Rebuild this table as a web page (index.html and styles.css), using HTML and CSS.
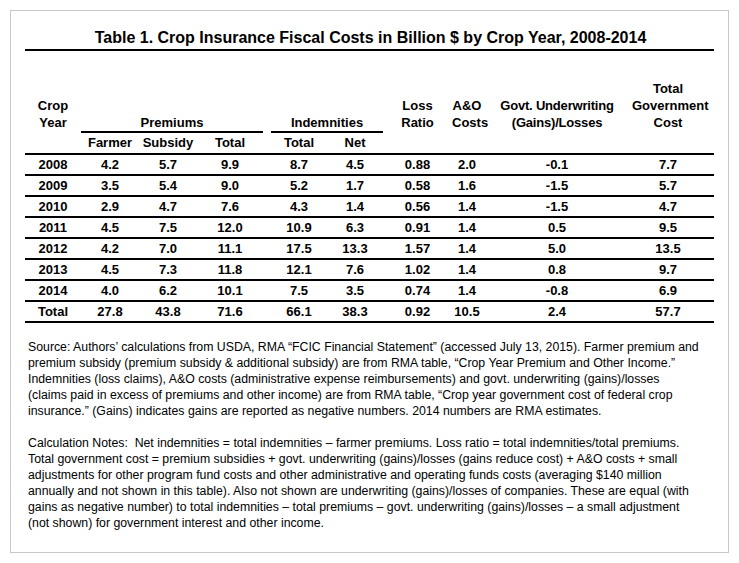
FILE: index.html
```html
<!DOCTYPE html>
<html>
<head>
<meta charset="utf-8">
<link rel="stylesheet" href="styles.css">
</head>
<body>
<div class="frame">
  <div class="title">Table 1. Crop Insurance Fiscal Costs in Billion $ by Crop Year, 2008-2014</div>
  <div class="tbl">
    <div class="head">
      <div class="h c1">Crop<br>Year</div>
      <div class="h prem">Premiums</div>
      <div class="h indem">Indemnities</div>
      <div class="h c8">Loss<br>Ratio</div>
      <div class="h c9">A&amp;O<br>Costs</div>
      <div class="h c10">Govt. Underwriting<br>(Gains)/Losses</div>
      <div class="h c11">Total<br>Government<br>Cost</div>
      <div class="s c2">Farmer</div>
      <div class="s c3">Subsidy</div>
      <div class="s c4">Total</div>
      <div class="s c6">Total</div>
      <div class="s c7">Net</div>
    </div>
    <div class="row"><span>2008</span><span>4.2</span><span>5.7</span><span>9.9</span><span></span><span>8.7</span><span>4.5</span><span>0.88</span><span>2.0</span><span>-0.1</span><span>7.7</span></div>
    <div class="row"><span>2009</span><span>3.5</span><span>5.4</span><span>9.0</span><span></span><span>5.2</span><span>1.7</span><span>0.58</span><span>1.6</span><span>-1.5</span><span>5.7</span></div>
    <div class="row"><span>2010</span><span>2.9</span><span>4.7</span><span>7.6</span><span></span><span>4.3</span><span>1.4</span><span>0.56</span><span>1.4</span><span>-1.5</span><span>4.7</span></div>
    <div class="row"><span>2011</span><span>4.5</span><span>7.5</span><span>12.0</span><span></span><span>10.9</span><span>6.3</span><span>0.91</span><span>1.4</span><span>0.5</span><span>9.5</span></div>
    <div class="row"><span>2012</span><span>4.2</span><span>7.0</span><span>11.1</span><span></span><span>17.5</span><span>13.3</span><span>1.57</span><span>1.4</span><span>5.0</span><span>13.5</span></div>
    <div class="row"><span>2013</span><span>4.5</span><span>7.3</span><span>11.8</span><span></span><span>12.1</span><span>7.6</span><span>1.02</span><span>1.4</span><span>0.8</span><span>9.7</span></div>
    <div class="row"><span>2014</span><span>4.0</span><span>6.2</span><span>10.1</span><span></span><span>7.5</span><span>3.5</span><span>0.74</span><span>1.4</span><span>-0.8</span><span>6.9</span></div>
    <div class="row last"><span>Total</span><span>27.8</span><span>43.8</span><span>71.6</span><span></span><span>66.1</span><span>38.3</span><span>0.92</span><span>10.5</span><span>2.4</span><span>57.7</span></div>
  </div>
  <div class="notes">
    <p>Source: Authors’ calculations from USDA, RMA “FCIC Financial Statement” (accessed July 13, 2015). Farmer premium and<br>premium subsidy (premium subsidy &amp; additional subsidy) are from RMA table, “Crop Year Premium and Other Income.”<br>Indemnities (loss claims), A&amp;O costs (administrative expense reimbursements) and govt. underwriting (gains)/losses<br>(claims paid in excess of premiums and other income) are from RMA table, “Crop year government cost of federal crop<br>insurance.” (Gains) indicates gains are reported as negative numbers. 2014 numbers are RMA estimates.</p>
    <p>Calculation Notes: &nbsp;Net indemnities = total indemnities – farmer premiums. Loss ratio = total indemnities/total premiums.<br>Total government cost = premium subsidies + govt. underwriting (gains)/losses (gains reduce cost) + A&amp;O costs + small<br>adjustments for other program fund costs and other administrative and operating funds costs (averaging $140 million<br>annually and not shown in this table). Also not shown are underwriting (gains)/losses of companies. These are equal (with<br>gains as negative number) to total indemnities – total premiums – govt. underwriting (gains)/losses – a small adjustment<br>(not shown) for government interest and other income.</p>
  </div>
</div>
</body>
</html>
```

FILE: styles.css
```css
* { box-sizing: border-box; }
html, body { margin: 0; padding: 0; background: #fff; }
body { font-family: "Liberation Sans", Arial, sans-serif; color: #000; }

.frame {
  margin: 10px;
  width: 719px;
  height: 543px;
  border: 1px solid #c8c8c8;
  padding: 18px 14px 0 14px;
}

.title {
  font-weight: bold;
  font-size: 16px;
  line-height: 18px;
  text-align: center;
  padding-bottom: 2px;
  border-bottom: 2px solid #000;
  padding-left: 2px;
}

.tbl { font-weight: bold; font-size: 13px; }

.head, .row {
  display: grid;
  grid-template-columns: 56px 58px 58px 66px 8px 56px 56px 69px 30px 150px 72px 9px;
}

.head {
  grid-template-rows: 82px 20px;
  line-height: 17px;
}

.h {
  grid-row: 1;
  align-self: end;
  text-align: center;
  white-space: nowrap;
  margin-bottom: 2px;
}
.c1 { grid-column: 1; }
.c8 { grid-column: 8; }
.c9 { grid-column: 9; }
.c10 { grid-column: 10; letter-spacing: -0.2px; }
.c11 { grid-column: 11; }
.prem {
  grid-column: 2 / 5;
  margin-bottom: 0;
  border-bottom: 2px solid #000;
}
.indem {
  grid-column: 6 / 8;
  margin-bottom: 0;
  border-bottom: 2px solid #000;
}

.s {
  grid-row: 2;
  text-align: center;
  line-height: 20px;
  white-space: nowrap;
}
.c2 { grid-column: 2; }
.c3 { grid-column: 3; }
.c4 { grid-column: 4; }
.c6 { grid-column: 6; }
.c7 { grid-column: 7; }

.row {
  border-top: 2px solid #000;
  height: 21px;
  line-height: 19px;
}
.row span { text-align: center; white-space: nowrap; }
.row.last {
  border-bottom: 2px solid #000;
  height: 23px;
}

.notes {
  font-size: 12.3px;
  line-height: 16px;
  padding-left: 3px;
  margin-top: 16px;
  white-space: nowrap;
}
.notes p { margin: 0 0 16px 0; }
```
